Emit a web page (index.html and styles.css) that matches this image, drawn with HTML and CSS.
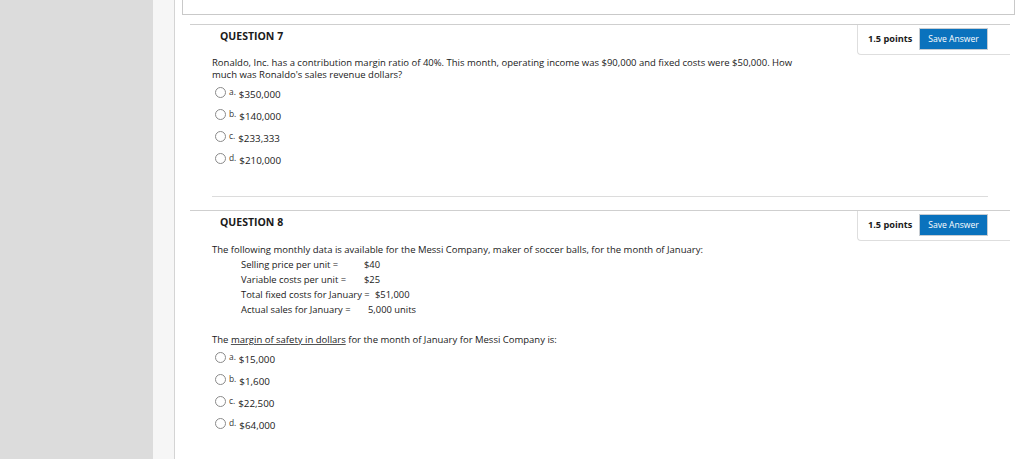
FILE: index.html
```html
<!DOCTYPE html>
<html>
<head>
<meta charset="utf-8">
<link rel="stylesheet" href="styles.css">
</head>
<body>
<div class="page">
  <div class="sidebar"></div>
  <div class="strip"></div>
  <div class="main">
    <div class="topbox"></div>

    <div class="question">
      <div class="qhead">
        <div class="qtitle">QUESTION 7</div>
        <div class="points">
          <span class="pts">1.5 points</span>
          <span class="btn">Save Answer</span>
        </div>
      </div>
      <div class="qbody">
        <p class="qtext">Ronaldo, Inc. has a contribution margin ratio of 40%. This month, operating income was $90,000 and fixed costs were $50,000. How much was Ronaldo's sales revenue dollars?</p>
        <ul class="opts">
          <li><span class="radio"></span><span class="let">a.</span><span class="val">$350,000</span></li>
          <li><span class="radio"></span><span class="let">b.</span><span class="val">$140,000</span></li>
          <li><span class="radio"></span><span class="let">c.</span><span class="val">$233,333</span></li>
          <li><span class="radio"></span><span class="let">d.</span><span class="val">$210,000</span></li>
        </ul>
        <div class="sep"></div>
      </div>
    </div>

    <div class="question q8">
      <div class="qhead">
        <div class="qtitle">QUESTION 8</div>
        <div class="points">
          <span class="pts">1.5 points</span>
          <span class="btn">Save Answer</span>
        </div>
      </div>
      <div class="qbody">
        <p class="qtext">The following monthly data is available for the Messi Company, maker of soccer balls, for the month of January:</p>
        <div class="data">
          <div class="drow"><span class="dl w1">Selling price per unit =</span><span>$40</span></div>
          <div class="drow"><span class="dl w1">Variable costs per unit =</span><span>$25</span></div>
          <div class="drow"><span class="dl w2">Total fixed costs for January =</span><span>$51,000</span></div>
          <div class="drow"><span class="dl w3">Actual sales for January =</span><span>5,000 units</span></div>
        </div>
        <p class="qtext q2">The <span class="u">margin of safety in dollars</span> for the month of January for Messi Company is:</p>
        <ul class="opts">
          <li><span class="radio"></span><span class="let">a.</span><span class="val">$15,000</span></li>
          <li><span class="radio"></span><span class="let">b.</span><span class="val">$1,600</span></li>
          <li><span class="radio"></span><span class="let">c.</span><span class="val">$22,500</span></li>
          <li><span class="radio"></span><span class="let">d.</span><span class="val">$64,000</span></li>
        </ul>
      </div>
    </div>
  </div>
</div>
</body>
</html>
```
FILE: styles.css
```css
* { box-sizing: border-box; }
html, body { margin: 0; padding: 0; background: #fff; }
body {
  font-family: "Open Sans", "DejaVu Sans", sans-serif;
  color: #1a1a1a;
  width: 1024px;
  height: 459px;
  overflow: hidden;
}
.page { display: flex; height: 459px; }
.sidebar { width: 153px; background: #dcdcdc; flex: none; }
.strip { width: 22px; background: #f6f6f6; border-right: 1px solid #d4d4d4; flex: none; }
.main { flex: 1; }

.topbox {
  margin: 0 9px 0 7px;
  height: 15px;
  border: 1px solid #c9c9c9;
  border-top: none;
}

.question {
  margin: 9px 14px 0 15px;
  border-top: 1px solid #cfcfcf;
}
.q8 { margin-top: 13px; }

.qhead { display: flex; justify-content: space-between; align-items: flex-start; height: 30px; }
.qtitle {
  font-weight: 700;
  font-size: 10.5px;
  line-height: 14px;
  padding: 4px 0 0 30px;
}
.points {
  width: 153px;
  height: 30px;
  border-left: 1px solid #dedede;
  border-bottom: 1px solid #dedede;
  border-bottom-left-radius: 4px;
  display: flex;
  align-items: center;
  padding: 0 0 2px 10px;
}
.pts { font-weight: 700; font-size: 9.2px; width: 51px; }
.btn {
  background: #0a72bd;
  color: #fff;
  font-size: 8.6px;
  width: 69px;
  height: 22px;
  line-height: 20px;
  text-align: center;
  border: 1px solid #c6ccd2;
}

.qbody { padding-left: 22px; }
.qtext {
  margin: 2px 0 0 0;
  font-size: 9.5px;
  line-height: 12px;
  width: 600px;
}
.q8 .qtext { margin-top: 3px; }
.q8 .qtext.q2 { margin-top: 17px; }
.u { text-decoration: underline; text-decoration-color: #555; }

.opts { list-style: none; margin: 1px 0 0 0; padding: 0 0 0 3px; }
.opts li { height: 22px; display: flex; align-items: center; }
.radio {
  width: 11px; height: 11px;
  border: 1px solid #8a8a8a;
  border-radius: 50%;
  flex: none;
  margin-right: 3px;
  position: relative; top: -1px;
}
.let { font-size: 8.4px; position: relative; top: -2px; margin-right: 3px; color: #333; }
.val { font-size: 9.8px; position: relative; top: 1px; }

.sep { margin: 26px 22px 0 0; border-top: 1px solid #dcdcdc; }

.data { padding-left: 29px; margin-top: 1px; }
.drow { font-size: 9.4px; line-height: 15px; display: flex; white-space: nowrap; }
.dl { display: inline-block; padding-right: 5px; flex: none; }
.w1 { min-width: 123px; }
.w2 { min-width: 134px; }
.w3 { min-width: 127px; }
```
